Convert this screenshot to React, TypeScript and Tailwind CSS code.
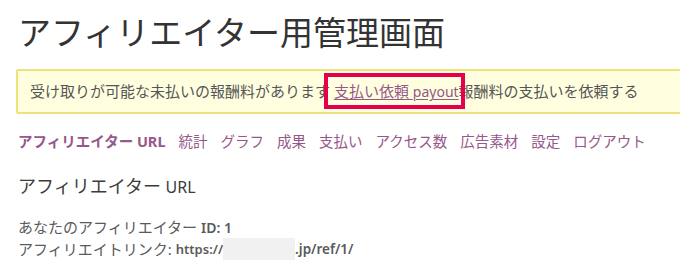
const navItems = ['統計', 'グラフ', '成果', '支払い', 'アクセス数', '広告素材', '設定', 'ログアウト'];

export default function App() {
  return (
    <div className="relative w-[680px] h-[278px] overflow-hidden bg-white px-[18px] pt-[16px] font-['Noto_Sans','Noto_Sans_CJK_JP',sans-serif] text-[#444]">
      <h1 className="text-[33px] leading-none text-[#333] whitespace-nowrap">アフィリエイター用管理画面</h1>

      <div className="mt-[20px] -ml-[2px] w-[690px] rounded-[2px] border-2 border-[#ece27c] bg-[#ffffe0] pl-[12px] pr-[9px] py-[8px] text-[15px] leading-[24px] text-[#555] whitespace-nowrap">
        受け取りが可能な未払いの報酬料があります{' '}
        <span className="relative">
          <a href="#" className="text-[#96588a] underline decoration-1 underline-offset-2">
            支払い依頼 <span className="text-[14px]">payout</span>
          </a>
          <span className="pointer-events-none absolute -left-[10px] -right-[6px] -top-[8px] -bottom-[8px] border-[4px] border-[#e5004f]" />
        </span>
        報酬料の支払いを依頼する
      </div>

      <nav className="mt-[17px] flex items-center gap-[13px] text-[14.5px] leading-[20px] text-[#96588a] whitespace-nowrap">
        <a href="#" className="font-semibold">
          アフィリエイター <span className="font-bold">URL</span>
        </a>
        {navItems.map((item) => (
          <a key={item} href="#">
            {item}
          </a>
        ))}
      </nav>

      <h2 className="mt-[22px] text-[18px] leading-[26px] text-[#3c3c3c]">
        アフィリエイター <span className="text-[16px]">URL</span>
      </h2>

      <div className="mt-[17px] text-[15px] leading-[21px] text-[#5a5a5a]">
        <p>
          あなたのアフィリエイター <span className="text-[14px] font-semibold">ID: 1</span>
        </p>
        <p className="flex items-center">
          アフィリエイトリンク:
          <span className="ml-[4px] text-[13px] font-semibold">https://</span>
          <span className="inline-block h-[22px] w-[72px] bg-[#f1f1f1]" />
          <span className="text-[13.5px] font-semibold">.jp/ref/1/</span>
        </p>
      </div>
    </div>
  );
}
